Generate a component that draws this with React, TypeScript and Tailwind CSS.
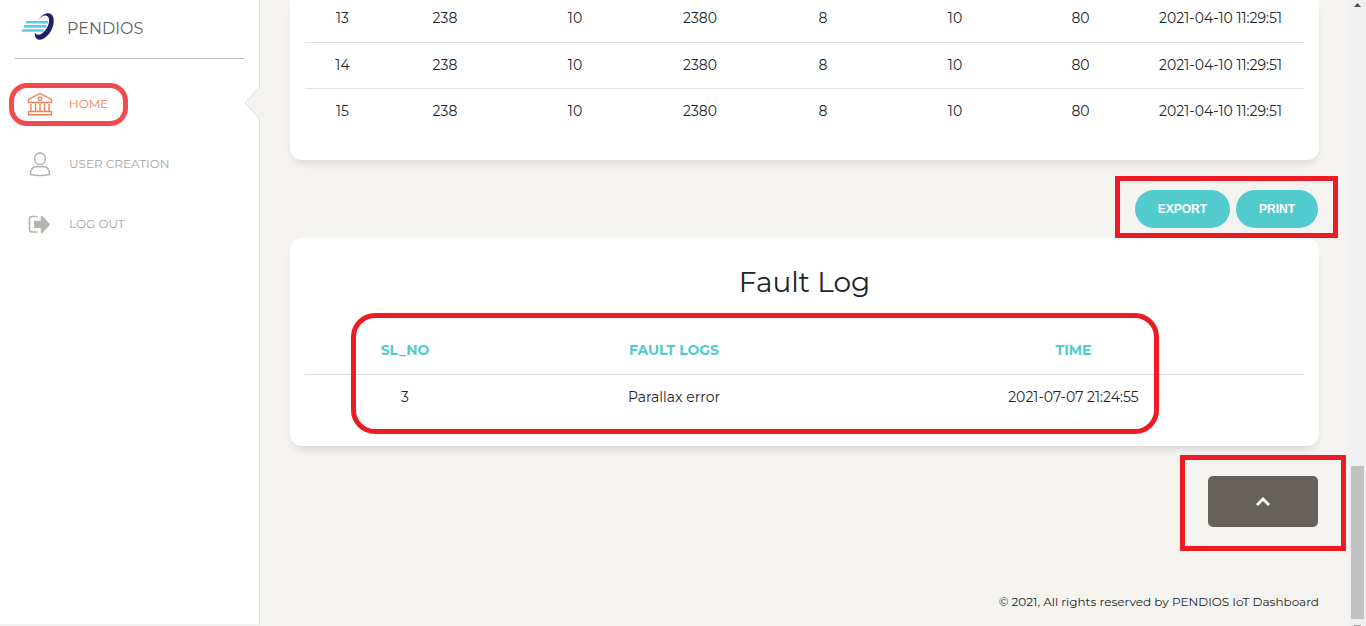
import type { ReactNode } from "react";

const readings = [13, 14, 15].map((n) => [n, 238, 10, 2380, 8, 10, 80, "2021-04-10 11:29:51"]);

function Logo() {
  return (
    <svg viewBox="0 0 34 28" className="h-7 w-[34px] shrink-0" aria-hidden="true">
      <path
        fillRule="evenodd"
        fill="#20206f"
        d="M18 6.500C20.500 2 25-.5 28.800.5c4.600 1.300 5 8.500 2.200 15.300-2.800 6.500-8.400 11.300-12.900 11-3.200-.2-4.600-3.200-4.200-7.400 1.300 2.700 4.200 3 7.200 1 3.600-2.500 6.300-7.200 6.900-11.600.5-3.800-.8-6-3.300-6.300-2.200-.2-4.500 1.200-6.700 4z"
      />
      <path stroke="#5ccbe9" strokeWidth="2.600" d="M5 9.300h22M3 13.400h22.500M1 17.500h21.500" />
    </svg>
  );
}

function BankIcon() {
  return (
    <svg viewBox="0 0 26 24" className="h-6 w-[26px]" fill="none" stroke="currentColor" strokeWidth="1.400" aria-hidden="true">
      <path d="M1.500 10.500V7.500L13 1.500l11.500 6v3zM1.500 19.500h23v3.300h-23zM4 12v7.500M8.500 12v7.500M13 12v7.500M17.500 12v7.500M22 12v7.500" />
      <circle cx="13" cy="6.800" r="1.700" />
    </svg>
  );
}

function UserIcon() {
  return (
    <svg viewBox="0 0 26 26" className="h-[26px] w-[26px] text-[#b5b4af]" fill="none" stroke="currentColor" strokeWidth="1.400" aria-hidden="true">
      <ellipse cx="13" cy="7.700" rx="5.400" ry="6" />
      <path d="M3.500 23.500c0-5 2.500-7.700 6-7.700h7c3.500 0 6 2.700 6 7.700-5 1.200-14 1.200-19 0z" />
    </svg>
  );
}

function LogoutIcon() {
  return (
    <svg viewBox="0 0 26 20" className="h-5 w-[26px] text-[#b5b4af]" aria-hidden="true">
      <path d="M10.500 2.500H5a2.500 2.500 0 0 0-2.500 2.500v10.500A2.500 2.500 0 0 0 5 18h5.500" fill="none" stroke="currentColor" strokeWidth="1.600" />
      <path d="M7 6.800h6.800V2.700c0-.9.900-1.300 1.500-.7l7.300 7.700c.5.500.5 1 0 1.500l-7.300 7.700c-.6.600-1.500.2-1.500-.7V14H7z" fill="currentColor" />
    </svg>
  );
}

function NavItem({ icon, label, active }: { icon: ReactNode; label: string; active?: boolean }) {
  return (
    <a
      href="#"
      aria-current={active ? "page" : undefined}
      className={`relative flex h-[60px] items-center gap-4 pl-[27px] text-[12px] ${active ? "text-[#ee8157]" : "text-[#a5a49f]"}`}
    >
      {icon}
      {label}
      {active && (
        <>
          <span className="absolute top-[9px] left-[9px] h-[43px] w-[119px] rounded-[18px] border-5 border-[#f3494f]" />
          <svg viewBox="0 0 16 32" className="absolute top-[13px] right-[-1px] h-8 w-4" aria-hidden="true">
            <path d="M16 0 1 16l15 16z" fill="#f4f3ef" />
            <path d="M15.500.5 1 16l14.500 15.500" fill="none" stroke="#dddddd" />
          </svg>
        </>
      )}
    </a>
  );
}

export default function App() {
  return (
    <div className="flex min-h-screen bg-[#f4f3ef] font-['Montserrat',Inter,sans-serif] text-[#212529]">
      <aside className="w-[260px] shrink-0 border-r border-b-2 border-r-[#dddddd] border-b-[#f0f0f0] bg-white">
        <div className="mx-[15px] flex h-[59px] items-center gap-3 border-b border-[#bbbbbb] pb-1 pl-[6px] text-[16px] text-[#66615b]">
          <Logo />
          <span className="pt-1">PENDIOS</span>
        </div>
        <nav className="pt-[15px]">
          <NavItem icon={<BankIcon />} label="HOME" active />
          <NavItem icon={<UserIcon />} label="USER CREATION" />
          <NavItem icon={<LogoutIcon />} label="LOG OUT" />
        </nav>
      </aside>

      <main className="-mt-1 min-w-0 flex-1 px-[30px]">
        <section className="rounded-b-xl bg-white px-[15px] pb-[26px] shadow-[0_6px_10px_-4px_rgba(0,0,0,0.15)]">
          <table className="w-full table-fixed text-center text-[14px]">
            <colgroup>
              <col className="w-[75px]" />
              <col className="w-[130px]" />
              <col className="w-[130px]" />
              <col className="w-[120px]" />
              <col className="w-[126px]" />
              <col className="w-[138px]" />
              <col className="w-[113px]" />
              <col className="w-[167px]" />
            </colgroup>
            <tbody>
              {readings.map((row) => (
                <tr key={row[0]} className="h-[46px] border-b border-[#dee2e6] last:border-b-0">
                  {row.map((value, i) => (
                    <td key={i}>{value}</td>
                  ))}
                </tr>
              ))}
            </tbody>
          </table>
        </section>

        <div className="flex justify-end pt-[30px] pb-[10px]">
          <div className="relative flex gap-[6px] pr-px font-['Liberation_Sans',sans-serif] text-[12px] font-bold text-white">
            <button type="button" className="h-[38px] rounded-full bg-[#51cbce] px-[23px]">EXPORT</button>
            <button type="button" className="h-[38px] rounded-full bg-[#51cbce] px-[23px]">PRINT</button>
            <span className="pointer-events-none absolute -top-[14px] -right-[19px] -bottom-[10px] -left-5 border-5 border-[#ed1c24]" />
          </div>
        </div>

        <section className="relative rounded-xl bg-white px-[15px] pb-[26px] shadow-[0_6px_10px_-4px_rgba(0,0,0,0.15)]">
          <h2 className="pt-[26px] pb-[27px] text-center text-[28px] leading-9">Fault Log</h2>
          <table className="w-full table-fixed text-center text-[14px]">
            <colgroup>
              <col className="w-[200px]" />
              <col className="w-[338px]" />
              <col className="w-[461px]" />
            </colgroup>
            <thead>
              <tr className="h-[47px] border-b border-[#dddddd] text-[#51cbce]">
                <th className="font-bold">SL_NO</th>
                <th className="font-bold">FAULT LOGS</th>
                <th className="font-bold">TIME</th>
              </tr>
            </thead>
            <tbody>
              <tr className="h-[46px]">
                <td>3</td>
                <td>Parallax error</td>
                <td>2021-07-07 21:24:55</td>
              </tr>
            </tbody>
          </table>
          <span className="pointer-events-none absolute top-[75px] right-[160px] bottom-3 left-[61px] rounded-3xl border-5 border-[#ed1c24]" />
        </section>

        <div className="flex justify-end pt-[30px] pr-px">
          <div className="relative">
            <button type="button" aria-label="Back to top" className="flex h-[51px] w-[110px] items-center justify-center rounded-[5px] bg-[#66615b] text-white">
              <svg viewBox="0 0 16 10" className="h-[10px] w-4" fill="none" stroke="currentColor" strokeWidth="2.800" aria-hidden="true">
                <path d="m2 8 6-6 6 6" />
              </svg>
            </button>
            <span className="pointer-events-none absolute -top-[21px] -right-7 -bottom-6 -left-7 border-5 border-[#ed1c24]" />
          </div>
        </div>

        <footer className="pt-[65px] pb-3 text-right text-[12px] leading-5">
          © 2021, All rights reserved by PENDIOS IoT Dashboard
        </footer>
      </main>

      <div className="flex w-[17px] shrink-0 flex-col items-center justify-between bg-[#f0f0f0] pt-[3px]" aria-hidden="true">
        <svg viewBox="0 0 7 4" className="h-1 w-[7px]">
          <path d="M0 4 3.500 0 7 4z" fill="#505050" />
        </svg>
        <div className="flex flex-col items-center gap-[6px]">
          <div className="h-[153px] w-[13px] bg-[#c1c1c1]" />
          <div className="h-px w-[7px] bg-[#a0a0a0]" />
        </div>
      </div>
    </div>
  );
}
